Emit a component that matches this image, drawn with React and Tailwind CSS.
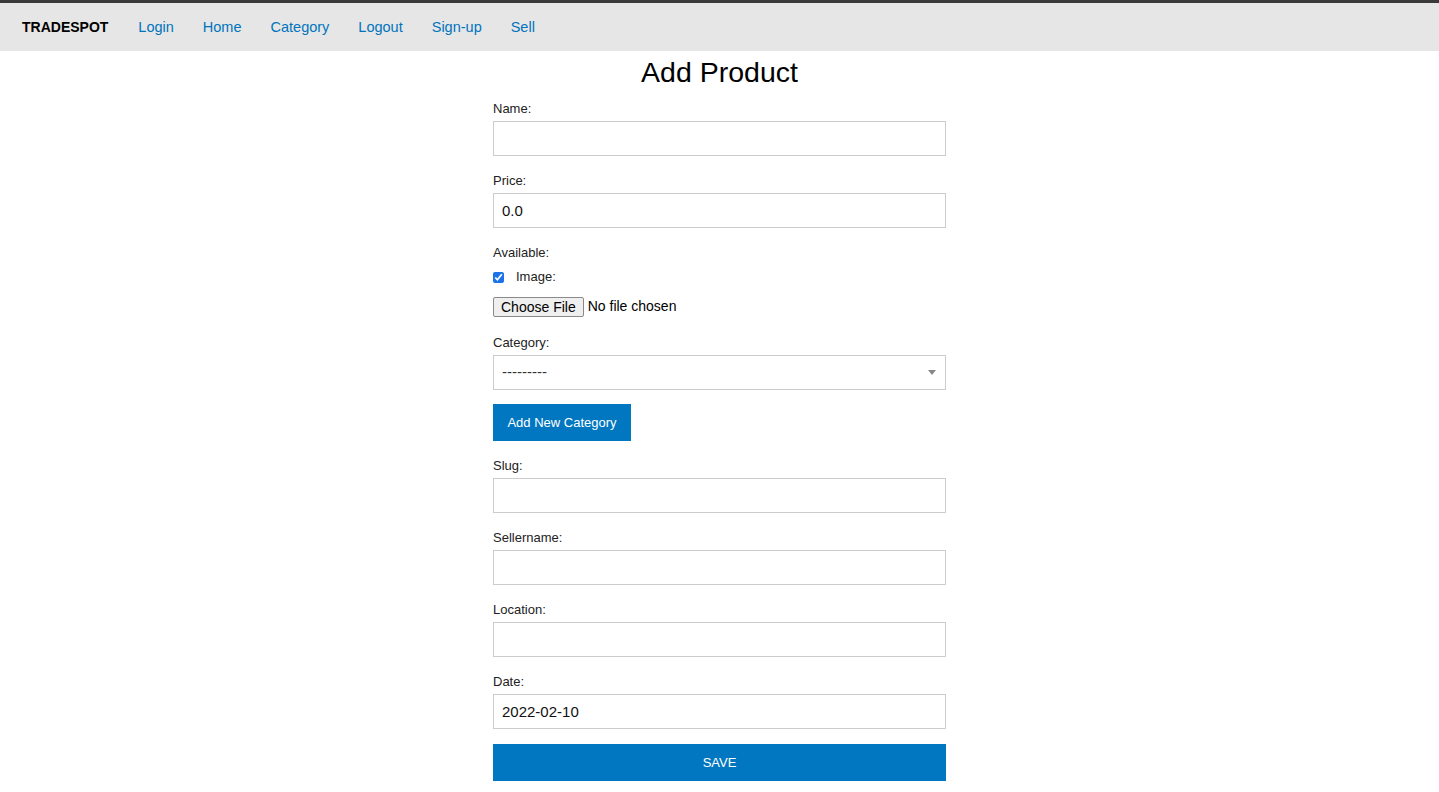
import React from "react";

const Field = ({ label, value = "" }) => (
    <div className="mb-[17px]">
        <label className="block text-[13px] leading-[16px] text-[#222] mb-[4px]">{label}</label>
        <input
            type="text"
            defaultValue={value}
            className="block w-full h-[35px] border border-[#cccccc] bg-white px-[8px] text-[15px] text-[#111] outline-none"
        />
    </div>
);

export default function App() {
    return (
        <div className="min-h-[792px] bg-white font-['Liberation_Sans',Arial,sans-serif] text-[#111]">
            <nav className="flex items-center h-[51px] bg-[#e6e6e6] border-t-[3px] border-[#3a3a3a] pl-[22px] pt-[1px]">
                <span className="text-[14px] font-bold text-black mr-[30px]">TRADESPOT</span>
                <div className="flex items-center gap-[29px] text-[14.5px] text-[#0074bd]">
                    <a href="#">Login</a>
                    <a href="#">Home</a>
                    <a href="#">Category</a>
                    <a href="#">Logout</a>
                    <a href="#">Sign-up</a>
                    <a href="#">Sell</a>
                </div>
            </nav>

            <div className="w-[453px] mx-auto">
                <h1 className="text-center text-[28.5px] leading-[32px] text-black mt-[5px] mb-[13px]">Add Product</h1>

                <Field label="Name:" />
                <Field label="Price:" value="0.0" />

                <label className="block text-[13px] leading-[16px] text-[#222] mb-[8px]">Available:</label>
                <div className="flex items-center mb-[11px]">
                    <input type="checkbox" defaultChecked className="w-[11px] h-[11px] m-0 accent-[#1a73e8]" />
                    <span className="ml-[12px] text-[13px] leading-[16px] text-[#222]">Image:</span>
                </div>
                <div className="flex items-center mb-[18px]">
                    <span className="inline-block border border-[#8a8a8a] bg-[#efefef] rounded-[2px] px-[7px] h-[20px] leading-[18px] text-[14px] text-black">Choose File</span>
                    <span className="ml-[4px] text-[14px] text-black">No file chosen</span>
                </div>

                <label className="block text-[13px] leading-[16px] text-[#222] mb-[4px]">Category:</label>
                <div className="relative h-[35px] border border-[#cccccc] bg-white flex items-center px-[8px] mb-[14px]">
                    <span className="text-[15px] text-[#333]">---------</span>
                    <span className="absolute right-[9px] top-[14px] w-0 h-0 border-l-[4px] border-r-[4px] border-t-[5px] border-l-transparent border-r-transparent border-t-[#888]"></span>
                </div>

                <button className="h-[37px] w-[138px] bg-[#0077c0] text-white text-[13px] mb-[17px]">Add New Category</button>

                <Field label="Slug:" />
                <Field label="Sellername:" />
                <Field label="Location:" />
                <Field label="Date:" value="2022-02-10" />

                <button className="block w-full h-[37px] bg-[#0077c0] text-white text-[13px] -mt-[2px]">SAVE</button>
            </div>
        </div>
    );
}
